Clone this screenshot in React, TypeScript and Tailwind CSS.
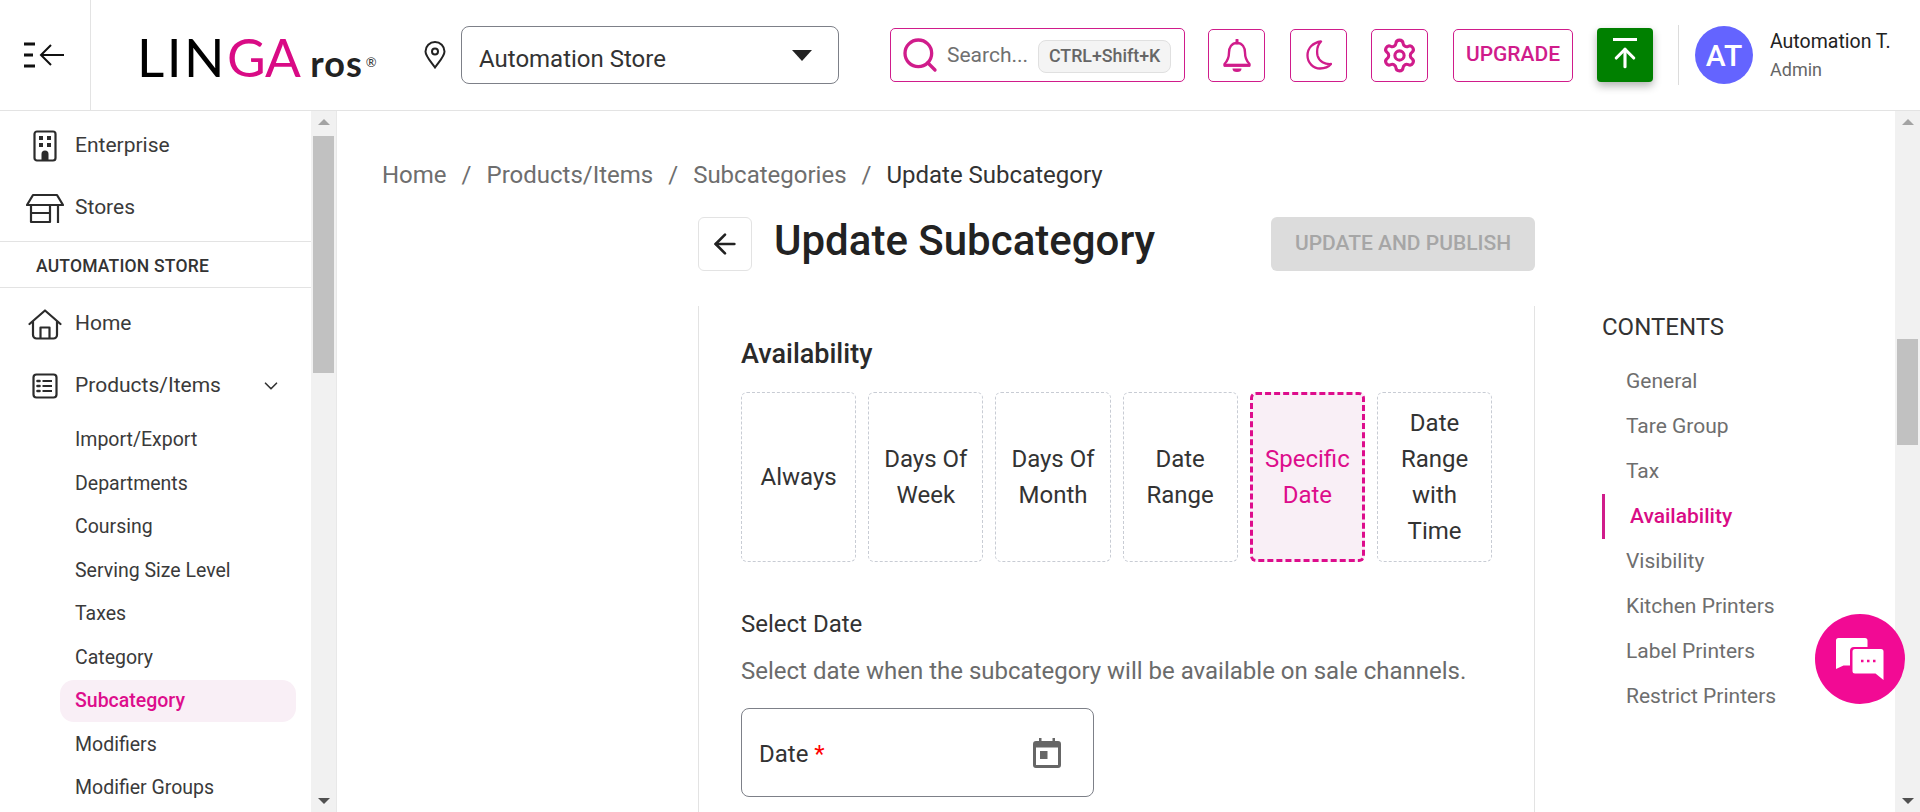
import { ArrowLeft, ArrowUp, ChevronDown, Search, Settings } from "lucide-react";

const storeLinks = [
  "Import/Export",
  "Departments",
  "Coursing",
  "Serving Size Level",
  "Taxes",
  "Category",
  "Subcategory",
  "Modifiers",
  "Modifier Groups",
];

const tiles = [
  ["Always"],
  ["Days Of", "Week"],
  ["Days Of", "Month"],
  ["Date", "Range"],
  ["Specific", "Date"],
  ["Date", "Range", "with", "Time"],
];

const contents = ["General", "Tare Group", "Tax", "Availability", "Visibility", "Kitchen Printers", "Label Printers", "Restrict Printers"];

function CollapseIcon() {
  return (
    <svg width="42" height="28" viewBox="0 0 42 28" fill="none" stroke="#111" strokeWidth="2.4">
      <path d="M1 3h11M1 14h9M1 25h11" strokeWidth="3" />
      <path d="M41 14H19M28 4 18 14l10 10" strokeWidth="2" />
    </svg>
  );
}

function PinIcon() {
  return (
    <svg width="22" height="28" viewBox="0 0 22 28" fill="none" stroke="#222" strokeWidth="2">
      <path d="M11 26.500C6 19.500 1.500 15 1.500 10.500a9.500 9.500 0 0 1 19 0C20.500 15 16 19.500 11 26.500Z" />
      <circle cx="11" cy="10.500" r="3" />
    </svg>
  );
}

function BellIcon() {
  return (
    <svg width="30" height="33" viewBox="0 0 30 33" fill="none" stroke="#d01c8b" strokeWidth="2.400" strokeLinejoin="round">
      <path d="M15 4c-5.500 0-8 4.500-8 9.500 0 5-1.500 8.500-4.500 11.500v1.500h25V25c-3-3-4.500-6.500-4.500-11.500S20.500 4 15 4Z" />
      <path d="M15 1v3" strokeWidth="3" strokeLinecap="round" />
      <path d="M2 26.200h26" strokeWidth="3" />
      <path d="M10.500 29.500h9a4.500 3.500 0 0 1-9 0Z" fill="#d01c8b" stroke="none" />
    </svg>
  );
}

function MoonIcon() {
  return (
    <svg width="26" height="30" viewBox="0 0 26 30" fill="none" stroke="#d01c8b" strokeWidth="2.300" strokeLinejoin="round">
      <path d="M15 1.500C7 2.500 1.500 8 1.500 15.500S7.500 28.500 14 28.500c4.500 0 8.500-1.500 11-4.500-6 .5-12-2.500-13.500-8.500C10.500 10 11.500 5 15 1.500Z" />
    </svg>
  );
}

function BuildingIcon() {
  return (
    <svg width="24" height="32" viewBox="0 0 24 32" fill="none">
      <rect x="1.500" y="1.500" width="21" height="29" rx="2.500" stroke="#2b2b2b" strokeWidth="2.200" />
      <path d="M6 6h4v4H6zM14 6h4v4h-4zM6 13h4v4H6zM14 13h4v4h-4zM8.500 30v-6a3.500 3.500 0 0 1 7 0v6z" fill="#2b2b2b" />
    </svg>
  );
}

function StoreIcon() {
  return (
    <svg width="38" height="31" viewBox="0 0 38 31" fill="none" stroke="#2b2b2b" strokeWidth="2.200" strokeLinejoin="round">
      <path d="M7 2h24l6 10H1zM5 12v17h19V12M5 20h19M32 12v18" />
    </svg>
  );
}

function HomeIcon() {
  return (
    <svg width="34" height="31" viewBox="0 0 34 31" fill="none" stroke="#2b2b2b" strokeWidth="2.200" strokeLinejoin="round" strokeLinecap="round">
      <path d="M1.500 15 17 1.500 32.500 15M5 12.500V26a3.500 3.500 0 0 0 3.500 3.500h17A3.500 3.500 0 0 0 29 26V12.500M12.500 29.500V18.500h9v11" />
    </svg>
  );
}

function ListIcon() {
  return (
    <svg width="26" height="26" viewBox="0 0 26 26" fill="none" stroke="#2b2b2b" strokeWidth="2.200">
      <rect x="1.500" y="1.500" width="23" height="23" rx="3" />
      <path d="M10.500 8H20M10.500 13H20M10.500 18H20" />
      <path d="M5.500 8h2M5.500 13h2M5.500 18h2" strokeLinecap="round" strokeWidth="2.600" />
    </svg>
  );
}

function CalendarIcon() {
  return (
    <svg width="28" height="30" viewBox="0 0 28 30" fill="#666">
      <path d="M6 0h2.500v3h11V0H22v3h3a3 3 0 0 1 3 3v21a3 3 0 0 1-3 3H3a3 3 0 0 1-3-3V6a3 3 0 0 1 3-3h3Zm-3 9.500V27h22V9.500Z" />
      <rect x="7" y="13" width="7.500" height="8" />
    </svg>
  );
}

function ChatIcon() {
  return (
    <svg width="48" height="42" viewBox="0 0 48 42" fill="none">
      <path d="M0 2.500A2.500 2.500 0 0 1 2.500 0H29a2.500 2.500 0 0 1 2.500 2.500V9H18a4 4 0 0 0-4 4v14.500H7.500L0 31Z" fill="#fff" />
      <path d="M19 11h26a2.500 2.500 0 0 1 2.500 2.500V42l-8-6.500H19a2.500 2.500 0 0 1-2.500-2.500V13.500A2.500 2.500 0 0 1 19 11Z" fill="#fff" />
      <path d="M25 23h2.500M31 23h2.500M37 23h2.500" stroke="#f20a94" strokeWidth="2.500" />
    </svg>
  );
}

function ScrollTrack({ thumbClass }: { thumbClass: string }) {
  return (
    <div className="flex h-full w-[25px] shrink-0 flex-col items-center bg-[#f1f1f1]">
      <div className="mt-[8px] h-0 w-0 border-x-[6px] border-b-[6px] border-x-transparent border-b-[#a3a3a3]" />
      <div className={`w-[21px] bg-[#c1c1c1] ${thumbClass}`} />
      <div className="mt-auto mb-[8px] h-0 w-0 border-x-[6px] border-t-[6px] border-x-transparent border-t-[#505050]" />
    </div>
  );
}

function Header() {
  return (
    <header className="flex h-[111px] shrink-0 items-center border-b border-[#e3e3e3] bg-white">
      <div className="flex h-full w-[91px] shrink-0 items-center justify-center border-r border-[#e3e3e3] pr-[2px]">
        <CollapseIcon />
      </div>
      <div className="ml-[46px] flex w-[243px] shrink-0 items-baseline pt-[2px] font-['Lato',sans-serif]">
        <span className="text-[53px] leading-none font-normal tracking-[2.500px] text-black">LIN</span>
        <span className="text-[53px] leading-none font-normal tracking-[-0.500px] text-[#d90b85]">GA</span>
        <span className="ml-[10px] text-[36px] leading-none font-bold tracking-[1px] text-[#222]">ros</span>
        <span className="mb-[14px] ml-[3px] self-end text-[13px] leading-none text-[#333]">®</span>
      </div>
      <div className="ml-[44px] shrink-0">
        <PinIcon />
      </div>
      <div className="ml-[15px] flex h-[58px] w-[378px] shrink-0 items-center justify-between rounded-[8px] border border-[#7d8088] pr-[26px] pl-[17px]">
        <span className="pt-[7px] text-[24px] leading-[30px] text-[#333]">Automation Store</span>
        <div className="h-0 w-0 border-x-[10px] border-t-[11px] border-x-transparent border-t-[#222]" />
      </div>
      <div className="ml-[51px] flex h-[54px] w-[295px] shrink-0 items-center rounded-[5px] border border-[#d01c8b] pl-[9px]">
        <Search size={40} strokeWidth={2} className="text-[#d01c8b]" />
        <span className="ml-[7px] pt-[2px] text-[21px] text-[#707070]">Search...</span>
        <span className="mt-[3px] ml-[10px] flex h-[33px] w-[133px] items-center justify-center rounded-[8px] border border-[#e0e0e0] bg-[#f4f4f4] text-[17.800px] font-medium text-[#666]">CTRL+Shift+K</span>
      </div>
      <div className="ml-[23px] flex h-[53px] w-[57px] shrink-0 items-center justify-center rounded-[5px] border border-[#d01c8b]">
        <BellIcon />
      </div>
      <div className="ml-[25px] flex h-[53px] w-[57px] shrink-0 items-center justify-center rounded-[5px] border border-[#d01c8b]">
        <MoonIcon />
      </div>
      <div className="ml-[24px] flex h-[53px] w-[57px] shrink-0 items-center justify-center rounded-[5px] border border-[#d01c8b]">
        <Settings size={37} strokeWidth={2} className="text-[#d01c8b]" />
      </div>
      <div className="ml-[25px] flex h-[53px] w-[120px] shrink-0 items-center justify-center rounded-[5px] border border-[#d01c8b] text-[21px] font-medium text-[#d01c8b]">UPGRADE</div>
      <div className="ml-[24px] flex h-[54px] w-[56px] shrink-0 flex-col items-center justify-center rounded-[4px] bg-[#008000] shadow-[0_4px_8px_rgba(0,0,0,0.3)]">
        <div className="h-[3px] w-[24px] bg-white" />
        <ArrowUp size={30} strokeWidth={2.500} className="mt-[2px] text-white" />
      </div>
      <div className="ml-[25px] h-[60px] w-px shrink-0 bg-[#dcdcdc]" />
      <div className="ml-[16px] flex h-[58px] w-[58px] shrink-0 items-center justify-center rounded-full bg-[#6464ff] text-[30px] font-medium text-white">AT</div>
      <div className="ml-[17px] flex flex-col gap-[5px]">
        <span className="text-[19.500px] leading-[24px] text-[#222]">Automation T.</span>
        <span className="text-[18px] leading-[22px] text-[#666]">Admin</span>
      </div>
    </header>
  );
}

function Sidebar() {
  return (
    <aside className="flex h-full w-[337px] shrink-0 border-r border-[#e8e8e8] bg-white">
      <nav className="flex-1 overflow-hidden text-[#3a3a3a]">
        <div className="flex h-[62px] items-center pt-[8px]">
          <div className="flex w-[75px] justify-center pl-[14px]"><BuildingIcon /></div>
          <span className="text-[21px]">Enterprise</span>
        </div>
        <div className="flex h-[68px] items-center pt-[2px]">
          <div className="flex w-[75px] justify-center pl-[14px]"><StoreIcon /></div>
          <span className="text-[21px]">Stores</span>
        </div>
        <div className="flex h-[47px] items-center border-y border-[#e3e3e3] pt-[3px] pl-[36px] text-[17.500px] font-medium tracking-[0.2px] text-[#333]">AUTOMATION STORE</div>
        <div className="flex h-[72px] items-center">
          <div className="flex w-[75px] justify-center pl-[14px]"><HomeIcon /></div>
          <span className="text-[21px]">Home</span>
        </div>
        <div className="flex h-[50px] items-center pt-[2px]">
          <div className="flex w-[75px] justify-center pl-[14px]"><ListIcon /></div>
          <span className="text-[21px]">Products/Items</span>
          <ChevronDown size={22} strokeWidth={1.800} className="ml-[39px] text-[#333]" />
        </div>
        <div className="mt-[8px] flex flex-col pr-[15px] pl-[60px]">
          {storeLinks.map((link) => (
            <div
              key={link}
              className={
                link === "Subcategory"
                  ? "my-[0.750px] flex h-[42px] items-center rounded-[14px] bg-[#f9eff6] pl-[15px] text-[19.500px] font-medium text-[#dd0d8c]"
                  : "flex h-[43.500px] items-center pl-[15px] text-[19.500px]"
              }
            >
              {link}
            </div>
          ))}
        </div>
      </nav>
      <ScrollTrack thumbClass="mt-[11px] h-[237px]" />
    </aside>
  );
}

function AvailabilityCard() {
  return (
    <section className="mt-[35px] h-[600px] w-[837px] border-x border-[#e3e3e3] pt-[30px] pl-[42px]">
      <h2 className="text-[27px] leading-[36px] font-medium text-[#2a2a2a]">Availability</h2>
      <div className="mt-[20px] flex gap-[12px]">
        {tiles.map((lines) => {
          const selected = lines[0] === "Specific";
          return (
            <div
              key={lines.join(" ")}
              className={
                selected
                  ? "flex h-[170px] w-[115.200px] flex-col items-center justify-center rounded-[6px] border-[3px] border-dashed border-[#dd0d8c] bg-[#f9eff6] text-[24px] leading-[36px] text-[#dd0d8c]"
                  : "flex h-[170px] w-[115.200px] flex-col items-center justify-center rounded-[6px] border border-dashed border-[#c8ccd4] text-[24px] leading-[36px] text-[#333]"
              }
            >
              {lines.map((line) => (
                <span key={line}>{line}</span>
              ))}
            </div>
          );
        })}
      </div>
      <p className="mt-[46px] text-[24px] leading-[32px] text-[#333]">Select Date</p>
      <p className="mt-[15px] text-[24px] leading-[32px] text-[#6b6b6b]">Select date when the subcategory will be available on sale channels.</p>
      <div className="mt-[21px] flex h-[89px] w-[353px] items-center justify-between rounded-[8px] border border-[#7d8088] pr-[32px] pl-[17px] text-[24px] text-[#333]">
        <span className="pt-[2px]">
          Date <span className="text-[#f00]">*</span>
        </span>
        <CalendarIcon />
      </div>
    </section>
  );
}

function ContentsNav() {
  return (
    <div className="mt-[95px] ml-[67px] w-[240px]">
      <h3 className="text-[24px] leading-[30px] text-[#333]">CONTENTS</h3>
      <ul className="mt-[17px] text-[21px] text-[#6e6e6e]">
        {contents.map((item) =>
          item === "Availability" ? (
            <li key={item} className="flex h-[45px] items-center border-l-[3px] border-[#d01c8b] pl-[25px] font-medium text-[#d90b85]">{item}</li>
          ) : (
            <li key={item} className="flex h-[45px] items-center pl-[24px]">{item}</li>
          ),
        )}
      </ul>
    </div>
  );
}

export default function App() {
  return (
    <div className="relative flex h-[812px] w-[1920px] flex-col overflow-hidden bg-white font-['Roboto',sans-serif]">
      <Header />
      <div className="flex min-h-0 flex-1">
        <Sidebar />
        <main className="min-w-0 flex-1 overflow-hidden">
          <nav className="flex h-[106px] items-end pb-[27px] pl-[45px] text-[24px] leading-[30px] text-[#6e6e6e]">
            <span>Home</span>
            <span className="mx-[15px]">/</span>
            <span>Products/Items</span>
            <span className="mx-[15px]">/</span>
            <span>Subcategories</span>
            <span className="mx-[15px]">/</span>
            <span className="text-[#333]">Update Subcategory</span>
          </nav>
          <div className="flex pl-[361px]">
            <div className="w-[837px]">
              <div className="flex items-center">
                <div className="flex h-[54px] w-[54px] items-center justify-center rounded-[6px] border border-[#e3e3e3]">
                  <ArrowLeft size={32} strokeWidth={2} className="text-[#222]" />
                </div>
                <h1 className="ml-[22px] pb-[6px] text-[42px] leading-[48px] font-medium text-[#222]">Update Subcategory</h1>
                <button className="ml-auto flex h-[54px] w-[264px] items-center justify-center rounded-[6px] bg-[#dcdcdc] text-[21px] font-medium text-[#a6a6a6]">UPDATE AND PUBLISH</button>
              </div>
              <AvailabilityCard />
            </div>
            <ContentsNav />
          </div>
        </main>
        <ScrollTrack thumbClass="mt-[214px] h-[106px]" />
      </div>
      <div className="absolute top-[614px] left-[1815px] flex h-[90px] w-[90px] items-center justify-center rounded-full bg-[#f20a94]">
        <ChatIcon />
      </div>
    </div>
  );
}
